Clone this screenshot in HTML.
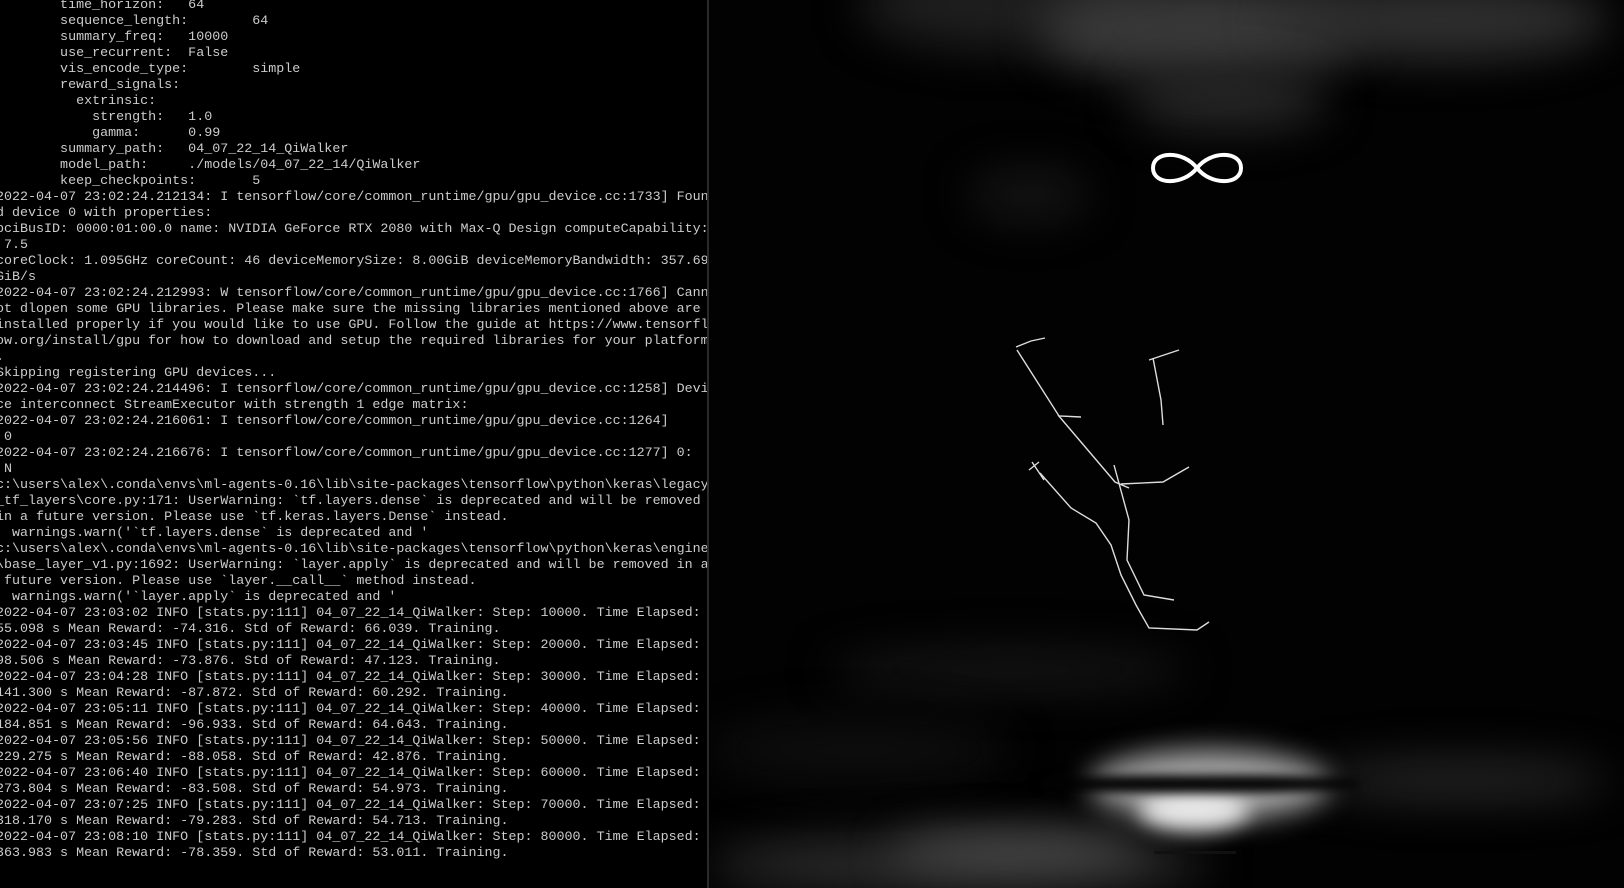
<!DOCTYPE html>
<html><head><meta charset="utf-8"><style>
html,body{margin:0;padding:0;width:1624px;height:888px;overflow:hidden;background:#000}
#term{position:absolute;left:0;top:0;width:707px;height:888px;overflow:hidden;background:#000}
#term pre{position:absolute;left:-4px;top:-2px;margin:0;font-family:"Liberation Mono",monospace;font-size:13.35px;line-height:16px;color:#cccccc;white-space:pre}
#div{position:absolute;left:707px;top:0;width:2px;height:888px;background:#2a2a2a}
#scene{position:absolute;left:709px;top:0;width:915px;height:888px;overflow:hidden;background:#020202}
.c{position:absolute;border-radius:50%;filter:blur(22px)}
</style></head><body>
<div id="term"><pre>        time_horizon:   64
        sequence_length:        64
        summary_freq:   10000
        use_recurrent:  False
        vis_encode_type:        simple
        reward_signals:
          extrinsic:
            strength:   1.0
            gamma:      0.99
        summary_path:   04_07_22_14_QiWalker
        model_path:     ./models/04_07_22_14/QiWalker
        keep_checkpoints:       5
2022-04-07 23:02:24.212134: I tensorflow/core/common_runtime/gpu/gpu_device.cc:1733] Foun
d device 0 with properties:
pciBusID: 0000:01:00.0 name: NVIDIA GeForce RTX 2080 with Max-Q Design computeCapability:
 7.5
coreClock: 1.095GHz coreCount: 46 deviceMemorySize: 8.00GiB deviceMemoryBandwidth: 357.69
GiB/s
2022-04-07 23:02:24.212993: W tensorflow/core/common_runtime/gpu/gpu_device.cc:1766] Cann
ot dlopen some GPU libraries. Please make sure the missing libraries mentioned above are
installed properly if you would like to use GPU. Follow the guide at https://www.tensorfl
ow.org/install/gpu for how to download and setup the required libraries for your platform
.
Skipping registering GPU devices...
2022-04-07 23:02:24.214496: I tensorflow/core/common_runtime/gpu/gpu_device.cc:1258] Devi
ce interconnect StreamExecutor with strength 1 edge matrix:
2022-04-07 23:02:24.216061: I tensorflow/core/common_runtime/gpu/gpu_device.cc:1264]
 0
2022-04-07 23:02:24.216676: I tensorflow/core/common_runtime/gpu/gpu_device.cc:1277] 0:
 N
c:\users\alex\.conda\envs\ml-agents-0.16\lib\site-packages\tensorflow\python\keras\legacy
_tf_layers\core.py:171: UserWarning: `tf.layers.dense` is deprecated and will be removed
in a future version. Please use `tf.keras.layers.Dense` instead.
  warnings.warn('`tf.layers.dense` is deprecated and '
c:\users\alex\.conda\envs\ml-agents-0.16\lib\site-packages\tensorflow\python\keras\engine
\base_layer_v1.py:1692: UserWarning: `layer.apply` is deprecated and will be removed in a
 future version. Please use `layer.__call__` method instead.
  warnings.warn('`layer.apply` is deprecated and '
2022-04-07 23:03:02 INFO [stats.py:111] 04_07_22_14_QiWalker: Step: 10000. Time Elapsed:
55.098 s Mean Reward: -74.316. Std of Reward: 66.039. Training.
2022-04-07 23:03:45 INFO [stats.py:111] 04_07_22_14_QiWalker: Step: 20000. Time Elapsed:
98.506 s Mean Reward: -73.876. Std of Reward: 47.123. Training.
2022-04-07 23:04:28 INFO [stats.py:111] 04_07_22_14_QiWalker: Step: 30000. Time Elapsed:
141.300 s Mean Reward: -87.872. Std of Reward: 60.292. Training.
2022-04-07 23:05:11 INFO [stats.py:111] 04_07_22_14_QiWalker: Step: 40000. Time Elapsed:
184.851 s Mean Reward: -96.933. Std of Reward: 64.643. Training.
2022-04-07 23:05:56 INFO [stats.py:111] 04_07_22_14_QiWalker: Step: 50000. Time Elapsed:
229.275 s Mean Reward: -88.058. Std of Reward: 42.876. Training.
2022-04-07 23:06:40 INFO [stats.py:111] 04_07_22_14_QiWalker: Step: 60000. Time Elapsed:
273.804 s Mean Reward: -83.508. Std of Reward: 54.973. Training.
2022-04-07 23:07:25 INFO [stats.py:111] 04_07_22_14_QiWalker: Step: 70000. Time Elapsed:
318.170 s Mean Reward: -79.283. Std of Reward: 54.713. Training.
2022-04-07 23:08:10 INFO [stats.py:111] 04_07_22_14_QiWalker: Step: 80000. Time Elapsed:
363.983 s Mean Reward: -78.359. Std of Reward: 53.011. Training.</pre></div>
<div id="div"></div>
<div id="scene">
  <div class="c" style="left:150px;top:-40px;width:300px;height:90px;background:#1e1e1e"></div>
  <div class="c" style="left:330px;top:-20px;width:320px;height:100px;background:#383838"></div>
  <div class="c" style="left:560px;top:-20px;width:340px;height:80px;background:#2e2e2e"></div>
  <div class="c" style="left:420px;top:70px;width:200px;height:60px;background:#262626"></div>
  <div class="c" style="left:260px;top:170px;width:120px;height:50px;background:#151515"></div>
  <div class="c" style="left:120px;top:650px;width:360px;height:40px;background:#161616"></div>
  <div class="c" style="left:0;top:720px;width:300px;height:60px;background:#0e0e0e"></div>
  <div class="c" style="left:600px;top:760px;width:300px;height:40px;background:#262626"></div>
  <div class="c" style="left:0;top:835px;width:500px;height:60px;background:#2a2a2a"></div>
  <div class="c" style="left:180px;top:835px;width:260px;height:30px;background:#555"></div>
  <div class="c" style="left:380px;top:750px;width:240px;height:70px;background:#a8a8a8;filter:blur(14px)"></div>
  <div class="c" style="left:430px;top:790px;width:110px;height:40px;background:#e8e8e8;filter:blur(10px)"></div>
  <div class="c" style="left:330px;top:775px;width:320px;height:18px;background:#030303;filter:blur(5px);border-radius:40%"></div>
  <div style="position:absolute;left:445px;top:851px;width:82px;height:3px;background:#111"></div>
  <svg width="915" height="888" style="position:absolute;left:0;top:0">
    <path d="M488 168 C474 150 444 151 444 168 C444 185 474 186 488 168 C502 150 532 151 532 168 C532 185 502 186 488 168 Z" fill="none" stroke="#fff" stroke-width="4"/>
    <g fill="none" stroke="#ddd" stroke-width="1.4">
      <path d="M307 347 L322 341 L336 338"/>
      <path d="M308 350 L350 416 L372 417"/>
      <path d="M349 415 L406 482 L420 488"/>
      <path d="M412 484 L454 482 L480 467"/>
      <path d="M440 360 L470 350"/>
      <path d="M444 358 L452 400 L454 425"/>
      <path d="M331 473 L362 508 L387 523 L402 545 L412 575 L427 605 L440 628 L488 630 L500 622"/>
      <path d="M405 465 L420 520 L418 560 L435 595 L465 600"/>
      <path d="M323 462 L335 480 M320 470 L330 462"/>
    </g>
  </svg>
</div>
</body></html>
